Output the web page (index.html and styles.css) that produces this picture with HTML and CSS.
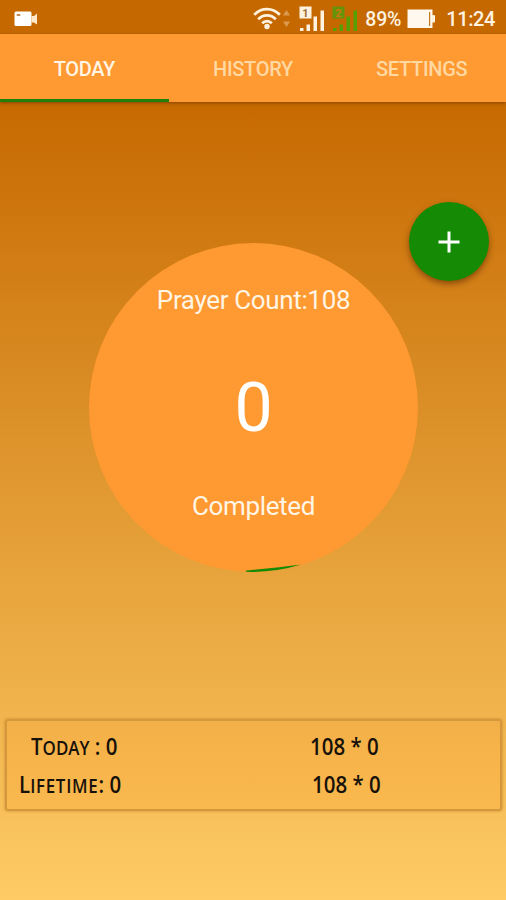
FILE: index.html
```html
<!DOCTYPE html>
<html lang="en">
<head>
    <meta charset="UTF-8">
    <meta name="viewport" content="width=device-width, initial-scale=1.0">
    <title>Prayer Counter</title>
    <link rel="stylesheet" href="styles.css">
</head>
<body>
    <div class="app">
        <div class="status-bar">
            <svg class="icon-video" width="24" height="16" viewBox="0 0 24 16">
                <rect x="0.5" y="0.5" width="17" height="14.5" rx="1.5" fill="#fff"/>
                <path d="M17.5 5L20 5L23 2.5V13.5L20 11.5H17.5Z" fill="#ffe9cc"/>
                <rect x="2.5" y="3" width="4" height="2" rx="1" fill="#c08a50"/>
            </svg>
            <svg class="icon-wifi" width="40" height="24" viewBox="0 0 40 24">
                <g fill="none" stroke="#fff3e0" stroke-width="2.7">
                    <path d="M1.2 8.8C8.5 1.2 19.5 1.2 26.8 8.8"/>
                    <path d="M5.2 13.2C10.2 8 17.8 8 22.8 13.2"/>
                    <path d="M9.2 17.2C12 14.3 16 14.3 18.8 17.2"/>
                </g>
                <circle cx="14" cy="20.5" r="2.7" fill="#fff3e0"/>
                <path d="M30 9.5L33.5 4L37 9.5Z M30 15.5L33.5 21L37 15.5Z" fill="#dc9a50"/>
            </svg>
            <svg class="icon-sim" width="26" height="26" viewBox="0 0 26 26">
                <rect x="0.5" y="0.5" width="12" height="12" fill="#fff3e0"/>
                <text class="sim-number" x="6.5" y="10.5" fill="#a06a35">1</text>
                <path d="M1 22H4.5V25H1Z M7.5 18.5H11V25H7.5Z M14.5 10.5H18V25H14.5Z M21.5 4.5H25V25H21.5Z" fill="#fff3e0"/>
            </svg>
            <svg class="icon-sim" width="26" height="26" viewBox="0 0 26 26">
                <rect x="0.5" y="0.5" width="12" height="12" fill="#67930a"/>
                <text class="sim-number" x="6.5" y="10.5" fill="#c9780f">2</text>
                <path d="M1 22H4.5V25H1Z M7.5 18.5H11V25H7.5Z M14.5 10.5H18V25H14.5Z M21.5 4.5H25V25H21.5Z" fill="#55a005"/>
            </svg>
            <span class="battery-level">89%</span>
            <svg class="icon-battery" width="29" height="20" viewBox="0 0 29 20">
                <rect x="0.5" y="0.5" width="25" height="18.5" fill="#fff8ee"/>
                <rect x="22" y="3" width="1.2" height="14" fill="#c47a20"/>
                <rect x="25" y="6" width="3" height="7.5" rx="1" fill="#fff3e0"/>
            </svg>
            <span class="clock">11:24</span>
        </div>

        <nav class="tabs">
            <a class="tab active">TODAY</a>
            <a class="tab">HISTORY</a>
            <a class="tab">SETTINGS</a>
        </nav>

        <main class="content">
            <button class="add-btn">
                <svg width="22" height="22" viewBox="0 0 22 22">
                    <path d="M11 0.5V21.5M0.5 11H21.5" stroke="#fff" stroke-width="3"/>
                </svg>
            </button>

            <div class="counter">
                <span class="counter-label">Prayer Count:108</span>
                <span class="counter-value">0</span>
                <span class="counter-label">Completed</span>
                <svg class="progress" width="329" height="329" viewBox="0 0 329 329">
                    <path d="M157 327.5L188 324.6L212 321.5A164.5 164.5 0 0 1 157 328.8Z" fill="#158a05"/>
                </svg>
            </div>

            <div class="totals">
                <div class="today"><span>T<small>ODAY</small> : 0</span></div>
                <div><span>108 * 0</span></div>
                <div class="lifetime"><span>L<small>IFETIME</small>: 0</span></div>
                <div class="second"><span>108 * 0</span></div>
            </div>
        </main>
    </div>
</body>
</html>
```
FILE: styles.css
```css
* {
    margin: 0;
    padding: 0;
    box-sizing: border-box;
}

body {
    font-family: Roboto, sans-serif;
    overflow: hidden;
}

.app {
    display: flex;
    flex-direction: column;
    height: 900px;
    background: linear-gradient(#c66900 100px, #fecb65 900px);
}

.status-bar {
    display: flex;
    align-items: center;
    height: 34px;
    padding: 0 11px 0 14px;
    background: #c56800;
    color: #fff3e0;
}

.icon-video {
    margin: 3px auto 0 0;
}

.icon-wifi {
    margin: 2px 6px 0 0;
}

.icon-sim {
    margin: 3px 7px 0 0;
}

.sim-number {
    font-size: 11px;
    font-weight: bold;
    text-anchor: middle;
}

.battery-level {
    font-size: 19.5px;
    font-weight: 500;
    letter-spacing: -0.2px;
    margin: 4px 6px 0 0;
}

.icon-battery {
    margin: 3px 10px 0 0;
}

.clock {
    font-size: 20px;
    font-weight: 500;
    letter-spacing: -0.4px;
    margin-top: 4px;
}

.tabs {
    display: flex;
    height: 68px;
    background: #ff9931;
    box-shadow: 0 1px 3px rgba(90, 40, 0, 0.6);
    z-index: 1;
}

.tab {
    flex: 1;
    text-align: center;
    line-height: 66px;
    padding-top: 2px;
    font-size: 20px;
    font-weight: 500;
    letter-spacing: -0.3px;
    color: #ffd8a2;
    border-bottom: 3px solid transparent;
}

.tab.active {
    color: #fff5e4;
    border-bottom-color: #218008;
}

.content {
    flex: 1;
    display: flex;
    flex-direction: column;
    align-items: center;
    position: relative;
    padding: 141px 4px 0 5px;
}

.add-btn {
    position: absolute;
    top: 100px;
    right: 17px;
    width: 80px;
    height: 79px;
    display: flex;
    align-items: center;
    justify-content: center;
    border: none;
    border-radius: 50%;
    background: #158a05;
    box-shadow: 0 3px 6px rgba(90, 40, 0, 0.6);
}

.counter {
    position: relative;
    display: flex;
    flex-direction: column;
    align-items: center;
    justify-content: space-between;
    width: 329px;
    height: 329px;
    padding: 41px 0 50px;
    border-radius: 50%;
    background: #ff9931;
    color: #fff5e4;
}

.counter-label {
    font-size: 26px;
    line-height: 32px;
    letter-spacing: -0.35px;
}

.counter-value {
    font-size: 68px;
    line-height: 80px;
    padding-top: 10px;
    color: #fff;
}

.progress {
    position: absolute;
    top: 0;
    left: 0;
}

.totals {
    display: grid;
    grid-template-columns: 303px 1fr;
    grid-template-rows: 38px 38px;
    align-self: stretch;
    height: 92px;
    margin-top: 147px;
    padding-top: 6px;
    border: 2px solid #d4973b;
    border-radius: 3px;
    background: linear-gradient(#f3b048, #fab94e);
    box-shadow: 0 0 3px rgba(170, 105, 20, 0.6);
    font-family: "Open Sans", sans-serif;
    font-size: 23px;
    font-weight: 600;
    line-height: 38px;
    color: #17110a;
}

.totals span {
    display: inline-block;
    white-space: nowrap;
    transform: scaleX(0.89);
    transform-origin: left;
}

.totals small {
    font-size: 19px;
}

.today {
    padding-left: 24px;
}

.lifetime {
    padding-left: 12px;
}

.lifetime small {
    letter-spacing: 0.8px;
}

.second {
    padding-left: 2px;
}
```
